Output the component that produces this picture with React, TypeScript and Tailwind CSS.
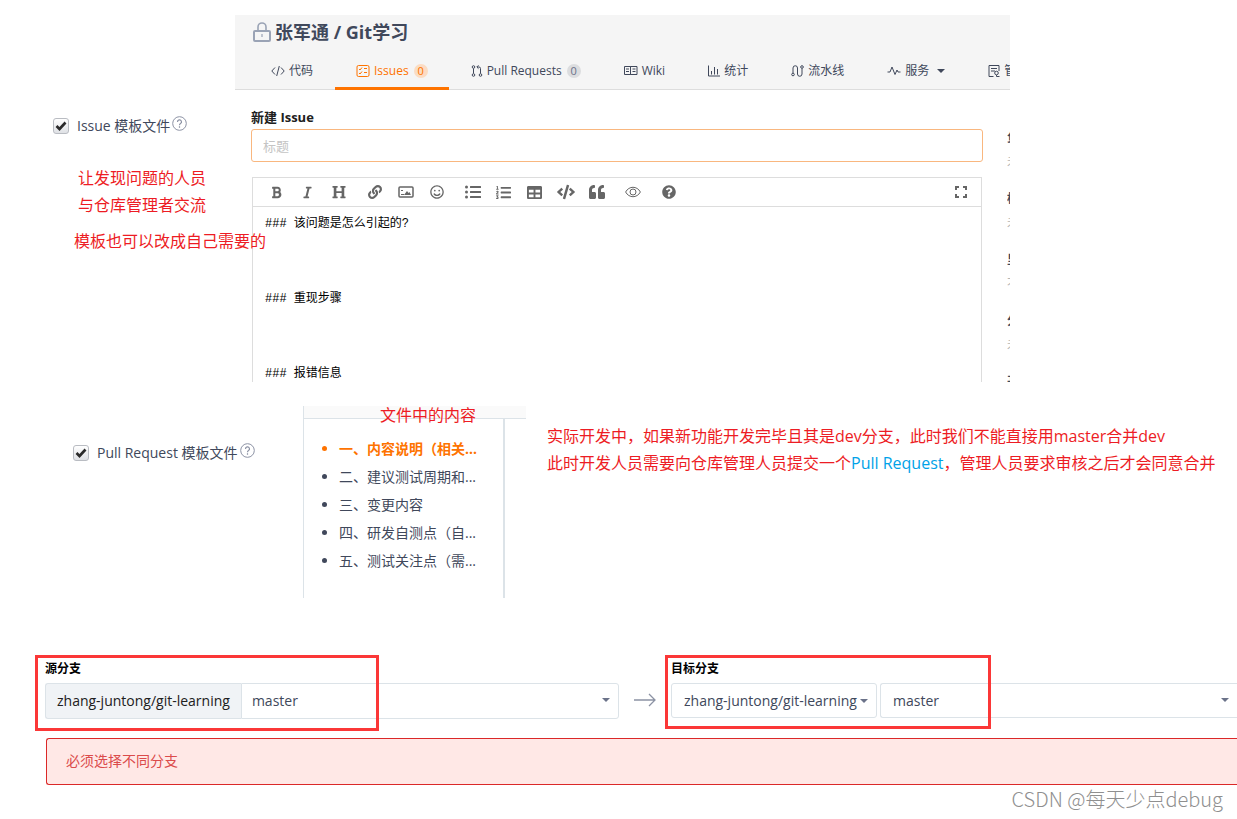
import { FC, ReactNode } from "react";
import {
    FaBold,
    FaItalic,
    FaHeading,
    FaLink,
    FaRegSmile,
    FaListUl,
    FaListOl,
    FaTable,
    FaCode,
    FaQuoteLeft,
    FaQuestionCircle,
} from "react-icons/fa";

type IconProps = {
    children: ReactNode;
    width?: number;
    height?: number;
    strokeWidth?: number;
    className?: string;
};

const Icon: FC<IconProps> = ({ children, width = 14, height = 14, strokeWidth = 1, className = "" }) => (
    <svg
        width={width}
        height={height}
        viewBox={`0 0 ${width} ${height}`}
        fill="none"
        stroke="currentColor"
        strokeWidth={strokeWidth}
        className={`shrink-0 ${className}`}
        aria-hidden="true"
    >
        {children}
    </svg>
);

const Caret: FC<{ className?: string }> = ({ className = "" }) => (
    <svg width="8" height="4" viewBox="0 0 8 4" fill="currentColor" className={`shrink-0 ${className}`} aria-hidden="true">
        <path d="M0 0h8L4 4z" />
    </svg>
);

const LockIcon = () => (
    <Icon width={18} height={20} strokeWidth={2} className="text-[#9aa3b5]">
        <rect x="1" y="9" width="16" height="10" rx="1" />
        <path d="M5 9V5a4 4 0 0 1 8 0v4" strokeWidth="1.6" />
        <path d="M9 12v3" strokeWidth="1.2" />
    </Icon>
);

type Tab = {
    label: string;
    icon: ReactNode;
    count?: number;
    active?: boolean;
    caret?: boolean;
};

const TABS: Tab[] = [
    {
        label: "代码",
        icon: (
            <Icon>
                <path d="M4 3.5L.8 7 4 10.5M10 3.5L13.2 7 10 10.5M8.3 2L5.7 12" />
            </Icon>
        ),
    },
    {
        label: "Issues",
        icon: (
            <Icon>
                <rect x="1" y="1.5" width="12" height="11" rx="1.5" />
                <path d="M3 5l1 1 2-2.5M3 9l1 1 2-2.5M8 4.5h3M8 8.5h3" />
            </Icon>
        ),
        count: 0,
        active: true,
    },
    {
        label: "Pull Requests",
        icon: (
            <Icon width={12}>
                <circle cx="2.5" cy="3" r="1.3" />
                <circle cx="2.5" cy="11" r="1.3" />
                <circle cx="9.5" cy="11" r="1.3" />
                <path d="M2.5 4.5v5M9.5 9.5V4.5Q9.5 3 8 3H6M7.5 1.3L5.8 3l1.7 1.7" />
            </Icon>
        ),
        count: 0,
    },
    {
        label: "Wiki",
        icon: (
            <Icon>
                <path d="M.5 2.5h6v8h-6zM6.5 2.5H13v8H6.5zM2 5h3M2 7.5h3M8.5 5h3M8.5 7.5h3" />
            </Icon>
        ),
    },
    {
        label: "统计",
        icon: (
            <Icon width={12}>
                <path d="M.5 1.5V12H12M3.5 7v3.5M6.5 3v7.5M9.5 5v5.5" />
            </Icon>
        ),
    },
    {
        label: "流水线",
        icon: (
            <Icon width={13}>
                <circle cx="2" cy="10.5" r="1.3" />
                <circle cx="11" cy="3" r="1.3" />
                <path d="M2 9V4a2 2 0 0 1 4.5 0v6A2.2 2.2 0 0 0 11 10V4.5" />
            </Icon>
        ),
    },
    {
        label: "服务",
        icon: (
            <Icon>
                <path d="M.5 8H3l2-5 3 7.5L10 6l1 2h2.5" />
            </Icon>
        ),
        caret: true,
    },
    {
        label: "管理",
        icon: (
            <Icon width={12}>
                <path d="M5.5 12.5H1v-11h10V7M3 4.500h6M3 7h4" />
                <circle cx="8.500" cy="9" r="1.800" />
                <path d="M8.500 11v1.500h3" />
            </Icon>
        ),
    },
];

type Tool = { name: string; icon: ReactNode };

const TOOL_GROUPS: Tool[][] = [
    [
        { name: "粗体", icon: <FaBold size={13} /> },
        { name: "斜体", icon: <FaItalic size={13} /> },
        { name: "标题", icon: <FaHeading size={14} /> },
    ],
    [
        { name: "链接", icon: <FaLink size={14} /> },
        {
            name: "图片",
            icon: (
                <Icon width={16} height={12} strokeWidth={1.5}>
                    <rect x="1" y="1" width="14" height="10" rx="1" />
                    <path d="M6 9l3-4 1.5 2 1-1L13 9z" fill="currentColor" stroke="none" />
                    <path d="M3 4.5h2M3 8.5h3" strokeWidth="1" />
                </Icon>
            ),
        },
        { name: "表情", icon: <FaRegSmile size={14} /> },
    ],
    [
        { name: "无序列表", icon: <FaListUl size={16} /> },
        { name: "有序列表", icon: <FaListOl size={15} /> },
        { name: "表格", icon: <FaTable size={15} /> },
        { name: "代码", icon: <FaCode size={18} /> },
        { name: "引用", icon: <FaQuoteLeft size={16} /> },
    ],
    [
        {
            name: "预览",
            icon: (
                <Icon width={16} height={12}>
                    <path d="M.6 6C4-.3 12-.3 15.4 6 12 12.3 4 12.3.6 6z" />
                    <circle cx="8" cy="6" r="3" />
                </Icon>
            ),
        },
    ],
    [{ name: "帮助", icon: <FaQuestionCircle size={14} /> }],
];

// only the first few pixels of this column are visible
const SIDE_FIELDS = [
    { title: "负责人", value: "未设置" },
    { title: "标签", value: "未设置" },
    { title: "里程碑", value: "不关联" },
    { title: "分支", value: "未关联" },
    { title: "开始日期", value: "" },
];

const OUTLINE = [
    "一、内容说明（相关...",
    "二、建议测试周期和...",
    "三、变更内容",
    "四、研发自测点（自...",
    "五、测试关注点（需...",
];

const TemplateCheckbox: FC<{ id: string; label: string }> = ({ id, label }) => (
    <div className="flex items-center text-sm leading-5 text-[#40485b]">
        <span className="grid mr-2">
            <input
                id={id}
                type="checkbox"
                defaultChecked
                className="col-start-1 row-start-1 w-4 h-4 appearance-none rounded-[3px] border border-[#b9bcc2] bg-linear-to-b from-white to-[#dfe1e5]"
            />
            <svg viewBox="0 0 16 16" className="col-start-1 row-start-1 w-4 h-4 pointer-events-none" aria-hidden="true">
                <path d="M3.5 8l3 3 6-6.5" fill="none" stroke="#2b2b2b" strokeWidth="2.6" />
            </svg>
        </span>
        <label htmlFor={id} className="pt-px">
            {label}
        </label>
        <Icon width={15} height={15} className="mb-1 ml-0.5 text-[#8c92a4]">
            <circle cx="7.5" cy="7.5" r="6.8" />
            <path d="M5.5 6a2 2 0 1 1 3 1.6q-1 .6-1 1.6M7.5 10.3v1.4" strokeWidth="1.2" />
        </Icon>
    </div>
);

const IssuePanel = () => (
    <div className="overflow-hidden flex-1 min-w-0">
        <header className="bg-[#f5f5f5] border-b border-[#dddddd] h-[75px] flex flex-col justify-between">
            <h1 className="flex gap-1 items-center pt-[3px] pl-[18px] text-lg leading-7 font-bold text-[#40485b]">
                <LockIcon />
                张军通 / Git学习
            </h1>
            <nav className="flex gap-px pl-[15px] -mb-px text-xs leading-5 text-[#40485b] whitespace-nowrap">
                {TABS.map((tab) => (
                    <a
                        key={tab.label}
                        href="#"
                        className={`flex shrink-0 gap-1 items-center px-[21px] pt-0.5 h-[37px] border-b-3 ${
                            tab.active ? "border-[#fe7300] text-[#fe7300]" : "border-transparent"
                        }`}
                    >
                        {tab.icon}
                        {tab.label}
                        {tab.count !== undefined && (
                            <span
                                className={`ml-px w-[14px] h-[14px] rounded-full text-center text-[11px] leading-[14px] ${
                                    tab.active ? "bg-[#fbdcc3]" : "bg-[#dcdddf] text-[#6b7289]"
                                }`}
                            >
                                {tab.count}
                            </span>
                        )}
                        {tab.caret && <Caret className="ml-1" />}
                    </a>
                ))}
            </nav>
        </header>

        <div className="flex h-[292px]">
            <div className="flex flex-col flex-1 pt-[17px] pl-4 min-w-0">
                <label htmlFor="issue-title" className="text-[13px] leading-5 font-bold text-[#202020]">
                    新建 Issue
                </label>
                <input
                    id="issue-title"
                    placeholder="标题"
                    className="mt-[2px] w-full h-[33px] px-[11px] text-[13px] border border-[#f9b77f] rounded-[3px] placeholder:text-[#c4c4c4]"
                />
                <div className="flex flex-col flex-1 mt-[15px] mr-px ml-px min-h-0 border border-b-0 border-[#dddddd]">
                    <div className="flex items-center px-2 h-[29px] border-b border-[#dddddd] text-[#666666]">
                        {TOOL_GROUPS.map((group) => (
                            <div key={group[0].name} className="flex mr-[5px]">
                                {group.map((tool) => (
                                    <button
                                        key={tool.name}
                                        aria-label={tool.name}
                                        className="flex justify-center items-center w-[31px] h-7"
                                    >
                                        {tool.icon}
                                    </button>
                                ))}
                            </div>
                        ))}
                        <button aria-label="全屏" className="flex justify-center items-center ml-auto w-6 h-7">
                            <Icon width={12} height={12} strokeWidth={2}>
                                <path d="M1 4V1h3M8 1h3v3M11 8v3H8M4 11H1V8" />
                            </Icon>
                        </button>
                    </div>
                    <textarea
                        aria-label="Issue 内容"
                        defaultValue={"### 该问题是怎么引起的?\n\n\n### 重现步骤\n\n\n### 报错信息"}
                        className="overflow-hidden flex-1 px-3 pt-[5px] text-xs leading-[25px] text-black resize-none font-['Liberation_Mono','Noto_Sans_CJK_SC',monospace]"
                    />
                </div>
            </div>
            <aside className="overflow-hidden pt-[38px] ml-6 w-[3px] text-xs leading-5 whitespace-nowrap">
                {SIDE_FIELDS.map((field) => (
                    <div key={field.title} className="h-[61px]">
                        <div className="font-bold text-[#40485b]">{field.title}</div>
                        <div className="mt-1 text-[#b5b5b5]">{field.value}</div>
                    </div>
                ))}
            </aside>
        </div>
    </div>
);

type BranchSelectProps = {
    label: string;
    className: string;
    selectClassName: string;
};

const BranchSelect: FC<BranchSelectProps> = ({ label, className, selectClassName }) => (
    <div className={`relative flex-1 min-w-0 border border-[#dce3e8] ${className}`}>
        <select
            aria-label={label}
            className={`w-full h-full text-sm appearance-none text-[#40485b] ${selectClassName}`}
        >
            <option>master</option>
        </select>
        <Caret className="absolute right-2 top-1/2 -mt-[3px] pointer-events-none text-[#6b7289]" />
    </div>
);

const BranchRow = () => (
    <div className="grid grid-cols-[574fr_52px_566fr] pl-[45px] pt-1">
        <section className="relative">
            <h2 className="text-xs leading-5 font-bold text-black">源分支</h2>
            <div className="flex mt-1 h-9">
                <span className="flex items-center px-[11px] text-sm font-medium text-[#202020] bg-[#f0f3f6] rounded-l-[3px] border border-r-0 border-[#dce3e8]">
                    zhang-juntong/git-learning
                </span>
                <BranchSelect label="源分支" className="rounded-r-[3px]" selectClassName="px-[10px]" />
            </div>
            <div className="absolute -top-1 -left-[10px] w-[344px] h-[76px] border-3 border-[#fb3737] pointer-events-none" />
        </section>

        <div className="flex justify-center items-center pt-[22px]">
            <Icon width={22} height={14} className="text-[#8c92a4]">
                <path d="M0 7h21M15 1l6 6-6 6" strokeWidth="1.3" />
            </Icon>
        </div>

        <section className="relative">
            <h2 className="text-xs leading-5 font-bold text-black">目标分支</h2>
            <div className="flex gap-[3px] mt-1 h-[35px]">
                <div className="relative w-[206px] border border-[#dce3e8] rounded-[3px]">
                    <select
                        aria-label="目标仓库"
                        className="px-3 w-full h-full text-sm appearance-none text-[#40485b]"
                    >
                        <option>zhang-juntong/git-learning</option>
                    </select>
                    <Caret className="absolute right-2 top-1/2 -mt-0.5 pointer-events-none text-[#6b7289]" />
                </div>
                <BranchSelect label="目标分支" className="border-r-0 rounded-l-[3px]" selectClassName="px-3" />
            </div>
            <div className="absolute -top-1 -left-[6px] w-[326px] h-[74px] border-3 border-[#fb3737] pointer-events-none" />
        </section>
    </div>
);

const App = () => {
    return (
        <main className="overflow-hidden bg-white font-['Open_Sans','Noto_Sans_CJK_SC',sans-serif]">
            <div className="flex pt-[15px] pr-[227px]">
                <div className="relative z-10 shrink-0 w-[235px] pt-[100px] pl-[53px]">
                    <TemplateCheckbox id="issue-template" label="Issue 模板文件" />
                    <div className="pt-[29px] text-base leading-[27px] text-[#ed1c24] whitespace-nowrap">
                        <p className="pl-[25px]">让发现问题的人员</p>
                        <p className="pl-[25px]">与仓库管理者交流</p>
                        <p className="pt-[9px] pl-[21px]">模板也可以改成自己需要的</p>
                    </div>
                </div>
                <IssuePanel />
            </div>

            <div className="flex mt-6">
                <div className="shrink-0 w-[303px] pt-9 pl-[73px]">
                    <TemplateCheckbox id="pr-template" label="Pull Request 模板文件" />
                </div>
                <div className="relative shrink-0 w-[223px] border-l border-[#dce3e8]">
                    <div className="h-[13px] bg-[#fafafa] border-b border-[#dce3e8]" />
                    <p className="absolute -top-1 left-[76px] text-base leading-[27px] text-[#ed1c24] whitespace-nowrap">
                        文件中的内容
                    </p>
                    <ul className="pt-4 pl-[35px] w-[201px] h-[179px] border-r-2 border-[#dce3e8] text-sm leading-7 list-disc text-[#40485b] whitespace-nowrap">
                        {OUTLINE.map((item, index) => (
                            <li key={item} className={index === 0 ? "font-bold text-[#fe7300]" : ""}>
                                {item}
                            </li>
                        ))}
                    </ul>
                </div>
                <div className="pt-[17px] pl-[21px] text-base leading-[27px] text-[#ed1c24] whitespace-nowrap">
                    <p>实际开发中，如果新功能开发完毕且其是dev分支，此时我们不能直接用master合并dev</p>
                    <p>
                        此时开发人员需要向仓库管理人员提交一个<span className="text-[#00a2e8]">Pull Request</span>
                        ，管理人员要求审核之后才会同意合并
                    </p>
                </div>
            </div>

            <div className="mt-[57px]">
                <BranchRow />
                <div
                    role="alert"
                    className="flex items-center mt-[19px] ml-[46px] pl-[19px] pb-0.5 h-[47px] text-sm text-[#db4b4b] bg-[#ffe8e6] border border-r-0 border-[#db2828] rounded-l-[3px]"
                >
                    必须选择不同分支
                </div>
            </div>

            <footer className="pr-[14px] text-right text-xl leading-7 text-[#8f8f8f] font-light font-['Noto_Sans_CJK_SC',sans-serif]">
                CSDN @每天少点debug
            </footer>
        </main>
    );
};

export default App;
